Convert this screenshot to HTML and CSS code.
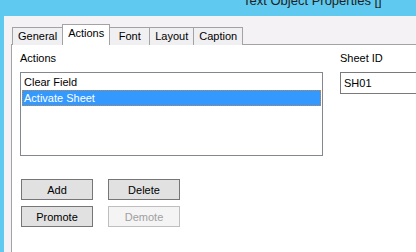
FILE: index.html
```html
<!DOCTYPE html>
<html lang="en">
<head>
  <meta charset="UTF-8" />
  <title>Text Object Properties</title>
  <link rel="stylesheet" href="styles.css">
</head>
<body>

  <div class="titlebar">
    <span class="title">Text Object Properties []</span>
  </div>

  <div class="window">
    <div class="tabs">
      <div class="tab">General</div>
      <div class="tab selected">Actions</div>
      <div class="tab">Font</div>
      <div class="tab">Layout</div>
      <div class="tab">Caption</div>
    </div>

    <div class="panel">
      <div class="fields">
        <div class="field">
          <div class="label">Actions</div>
          <div class="listbox">
            <div class="item">Clear Field</div>
            <div class="item active">Activate Sheet</div>
          </div>
        </div>
        <div class="field">
          <div class="label">Sheet ID</div>
          <div class="textbox">SH01</div>
        </div>
      </div>

      <div class="buttons">
        <button class="btn">Add</button>
        <button class="btn">Delete</button>
        <button class="btn">Promote</button>
        <button class="btn" disabled>Demote</button>
      </div>
    </div>
  </div>

</body>
</html>
```

FILE: styles.css
```css
body {
  margin: 0;
  padding: 0;
  width: 416px;
  height: 252px;
  overflow: hidden;
  background-color: #5fc9ef;
  font-family: "Liberation Sans", Arial, sans-serif;
  font-size: 11px;
  color: #000;
  display: flex;
  flex-direction: column;
}

.titlebar {
  height: 16px;
  overflow: hidden;
  display: flex;
  padding-left: 243px;
}

.title {
  font-size: 13px;
  line-height: 16px;
  margin-top: -7px;
  color: #1e1e1e;
  white-space: nowrap;
}

.window {
  flex: 1;
  margin-left: 4px;
  padding: 8px 0 0 7px;
  background-color: #f4f2f5;
  display: flex;
  flex-direction: column;
}

.tabs {
  display: flex;
  align-items: flex-end;
  padding-left: 1px;
  position: relative;
  z-index: 1;
  margin-bottom: -1px;
}

.tab {
  height: 17px;
  line-height: 17px;
  min-width: 29px;
  text-align: center;
  padding: 0 5px;
  border: 1px solid #a3a3a3;
  border-bottom: none;
  border-left: none;
  background-color: #f0eff1;
}

.tab:first-child {
  border-left: 1px solid #a3a3a3;
}

.tab.selected {
  height: 20px;
  line-height: 17px;
  padding: 0 5px;
  margin-left: -1px;
  border-left: 1px solid #a3a3a3;
  background-color: #fff;
}

.panel {
  flex: 1;
  background-color: #fff;
  border-top: 1px solid #a3a3a3;
  border-left: 1px solid #a3a3a3;
  padding: 7px 0 0 8px;
}

.fields {
  display: flex;
  gap: 17px;
}

.field {
  display: flex;
  flex-direction: column;
  gap: 7px;
}

.label {
  line-height: 13px;
}

.listbox {
  width: 299px;
  height: 80px;
  border: 1px solid #828790;
  padding: 1px;
}

.item {
  height: 16px;
  line-height: 16px;
  padding-left: 2px;
}

.item.active {
  background-color: #3399ff;
  color: #fff;
  border: 1px dotted #c9853c;
  line-height: 14px;
  height: 14px;
  padding-left: 1px;
}

.textbox {
  width: 100px;
  height: 20px;
  line-height: 20px;
  border: 1px solid #7a7a7a;
  padding-left: 3px;
}

.buttons {
  display: grid;
  grid-template-columns: 72px 72px;
  column-gap: 15px;
  row-gap: 6px;
  margin: 23px 0 0 1px;
}

.btn {
  height: 21px;
  padding: 0;
  font-family: inherit;
  font-size: 11px;
  font-weight: normal;
  background-color: #e1e1e1;
  border: 1px solid #767676;
  color: #000;
}

.btn:disabled {
  background-color: #f4f4f4;
  border-color: #bfbfbf;
  color: #a0a0a0;
}
```
